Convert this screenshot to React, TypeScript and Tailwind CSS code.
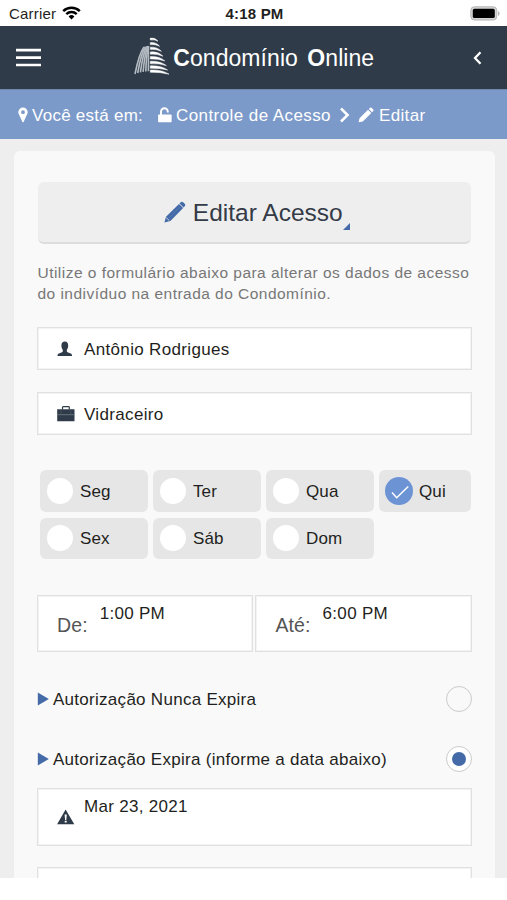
import clsx from "clsx";

const days = [
  { name: "Seg", checked: false },
  { name: "Ter", checked: false },
  { name: "Qua", checked: false },
  { name: "Qui", checked: true },
  { name: "Sex", checked: false },
  { name: "Sáb", checked: false },
  { name: "Dom", checked: false },
];

export default function App() {
  return (
    <div className="flex h-[900px] w-[507px] flex-col overflow-hidden bg-white font-['Liberation_Sans',Arial,sans-serif] text-[#1f1f21]">
      <StatusBar />
      <Header />
      <Breadcrumb />
      <main className="h-[739px] overflow-hidden bg-[#eeeeee] pl-[14px] pr-3 pt-3">
        <div className="h-[760px] rounded-md bg-[#f9f9f9] pl-[22.5px] pr-[23.5px] pt-[31px]">
          <Title />
          <p className="ml-px mt-[18px] whitespace-nowrap text-[15.5px] leading-[21px] tracking-[0.47px] text-[#777777]">
            Utilize o formulário abaixo para alterar os dados de acesso
            <br />
            do indivíduo na entrada do Condomínio.
          </p>
          <Field className="mt-[23px]" text="Antônio Rodrigues">
            <UserIcon />
          </Field>
          <Field className="mt-[22px]" text="Vidraceiro">
            <BriefcaseIcon />
          </Field>
          <Days />
          <div className="mt-[36px] flex gap-[2px]">
            <TimeField label="De:" value="1:00 PM" />
            <TimeField label="Até:" value="6:00 PM" />
          </div>
          <Radio className="mt-[34px]" label="Autorização Nunca Expira" />
          <Radio
            className="mt-[34px]"
            label="Autorização Expira (informe a data abaixo)"
            checked
          />
          <div className="mt-4 flex h-[58px] border border-[#e1e1e1] bg-white pl-[19px] shadow-[inset_0_0_0_1px_#f3f3f3]">
            <WarningIcon />
            <span className="ml-[9.5px] mt-[8px] text-[17px] leading-5 tracking-[0.3px]">
              Mar 23, 2021
            </span>
          </div>
          <div className="mt-[21px] h-[58px] border border-[#e1e1e1] bg-white shadow-[inset_0_0_0_1px_#f3f3f3]" />
        </div>
      </main>
    </div>
  );
}

function StatusBar() {
  return (
    <div className="grid h-[26px] grid-cols-3 items-center pl-[9px] pr-[7px]">
      <div className="flex items-center gap-[6px]">
        <span className="pt-[2px] text-[15px] leading-5 tracking-[0.2px]">Carrier</span>
        <svg width="19" height="14" viewBox="0 0 19 14" fill="none" stroke="#000" strokeWidth="2.5">
          <path d="M1.2 5.1a12 12 0 0 1 16.6 0" />
          <path d="M4.3 8.2a7.5 7.5 0 0 1 10.4 0" />
          <path d="M6.6 10.5a4.1 4.1 0 0 1 5.8 0L9.5 13.4Z" fill="#000" stroke="none" />
        </svg>
      </div>
      <span className="whitespace-nowrap pt-[2px] text-center text-[15px] font-bold leading-5 tracking-[0.2px]">
        4:18 PM
      </span>
      <svg className="justify-self-end" width="30" height="15" viewBox="0 0 30 15">
        <rect x="0.8" y="0.8" width="26" height="13.2" rx="3.6" fill="#d4d4d4" stroke="#b5b5b5" />
        <rect x="2.8" y="2.8" width="22" height="9.2" rx="1.6" fill="#000" />
        <path d="M28.2 5v5c1.8-.7 1.8-4.3 0-5Z" fill="#a9a9a9" />
      </svg>
    </div>
  );
}

function Header() {
  return (
    <header className="flex h-[63px] items-center justify-between bg-[#2f3b48] pl-4 pr-[25px]">
      <svg width="25" height="19" viewBox="0 0 25 19" fill="#fff">
        <path d="M0 .8h25v2.6H0zM0 8.3h25v2.6H0zM0 15.7h25v2.6H0z" />
      </svg>
      <div className="mr-[6px] flex items-center">
        <div className="mb-[3px]">
          <Logo />
        </div>
        <span className="ml-[3.5px] whitespace-pre text-[23px] leading-7 tracking-[0.06px] text-white">
          <b>C</b>ondomínio <b className="ml-[3px]">O</b>nline
        </span>
      </div>
      <svg width="9" height="14" viewBox="0 0 9 14" fill="none" stroke="#fff" strokeWidth="2.3">
        <path d="M7.5 1.2 2 7l5.5 5.8" />
      </svg>
    </header>
  );
}

function Logo() {
  return (
    <svg width="36" height="38" viewBox="0 0 36 38" fill="none">
      <g stroke="#b4bbc2" strokeWidth="1.6">
        <path d="M1 37Q5 17 10 10" />
        <path d="M3.7 36Q7 17 11.4 9.6" />
        <path d="M6.4 35.4Q8.8 17 12.8 9.3" />
        <path d="M9.1 34.9Q10.7 17 13.8 9.1" />
        <path d="M11.8 34.5Q12.3 17 14.6 9" />
        <path d="M14.4 34.2V9" />
      </g>
      <g fill="#fff" stroke="#fff" strokeWidth="0.5">
        <path d="M16.3 1.1Q21 .2 24 4.2Q20.5 2.4 16.3 3Z" />
        <path d="M16.3 5.6Q22 5 25.6 9.3Q21.4 7 16.3 7.6Z" />
        <path d="M16.3 10.2Q23 9.7 27.4 14.3Q22 11.9 16.3 12.4Z" />
        <path d="M16.3 14.9Q24 14.3 29 19.2Q23 16.7 16.3 17.2Z" />
        <path d="M16.3 19.6Q25 19 30.8 23.9Q24 21.5 16.3 22Z" />
        <path d="M16.3 24.3Q26 23.8 32.4 28.6Q25 26.2 16.3 26.7Z" />
        <path d="M16.3 28.8Q27 28.4 33.6 33Q26 30.9 16.3 31.3Z" />
        <path d="M16.3 33Q28 32.5 35 37.2Q26 35 16.3 35.3Z" />
      </g>
    </svg>
  );
}

function Breadcrumb() {
  return (
    <nav className="flex h-[50px] items-center border-t border-[#6f88ae] bg-[#7c9ac9] pl-[18px] pt-px text-[17px] leading-5 text-white">
      <svg width="10" height="16" viewBox="0 0 10 16" fill="#fff">
        <path
          fillRule="evenodd"
          d="M5 .5a4.7 4.7 0 0 0-4.7 4.7c0 1 .3 1.7.7 2.4l3.3 7.1c.3.7 1.1.7 1.4 0L9 7.6c.4-.7.7-1.4.7-2.4A4.7 4.7 0 0 0 5 .5Zm0 2.8a1.9 1.9 0 1 1 0 3.8 1.9 1.9 0 0 1 0-3.8Z"
        />
      </svg>
      <span className="ml-1 w-[112px] whitespace-nowrap pt-px tracking-[0.26px]">
        Você está em:
      </span>
      <svg className="ml-[14px]" width="14" height="16" viewBox="0 0 14 16">
        <path d="M3 8V4.7a3.4 3.4 0 0 1 6.8 0v.8" fill="none" stroke="#fff" strokeWidth="1.9" />
        <path d="M.9 7.5h11.9q.8 0 .8.8v6.2q0 .8-.8.8H.9q-.8 0-.8-.8V8.3q0-.8.8-.8Z" fill="#fff" />
      </svg>
      <span className="ml-1 w-[155px] whitespace-nowrap pt-px tracking-[0.42px]">
        Controle de Acesso
      </span>
      <svg className="ml-[8px]" width="11" height="16" viewBox="0 0 11 16" fill="none" stroke="#fff" strokeWidth="2.5">
        <path d="m2 1.5 6.6 6.5L2 14.5" />
      </svg>
      <svg className="ml-[8px]" width="16" height="16" viewBox="0 0 16 16" fill="#fff">
        <path d="M.6 15.3 1.5 11.2 10 2.8l3.3 3.3L4.8 14.4ZM10.8 2.1 12.2.8q.7-.6 1.3 0L15.3 2.6q.5.6 0 1.3L14 5.3Z" />
      </svg>
      <span className="ml-[5px] pt-px tracking-[0.35px]">Editar</span>
    </nav>
  );
}

function Title() {
  return (
    <div className="ml-px flex h-[62px] w-[433px] items-center justify-center rounded-md border-b-2 border-[#dddddd] bg-[#eeeeee] pl-[6px]">
      <svg width="22" height="22" viewBox="0 0 22 22" fill="#446ba8">
        <path d="M.4 21.5 2 15.7 15 3l4.1 4.1L6.4 19.9ZM15.5 2.5 17 1q1.1-.8 2.2.2l1.7 1.7q.9 1 0 2.1l-1.3 1.5Z" />
        <path d="M5 16.9 15.8 6.1" stroke="#5b80b6" strokeWidth="0.7" />
        <path d="m2.2 16.6 3.1 3" stroke="#eeeeee" strokeWidth="0.8" />
      </svg>
      <h1 className="ml-[6.5px] pt-px text-[24.5px] leading-8 text-[#343b47]">Editar Acesso</h1>
      <svg className="mt-[29px]" width="7" height="7" viewBox="0 0 7 7" fill="#446ba8">
        <path d="M7 0v7H0Z" />
      </svg>
    </div>
  );
}

function Field({
  text,
  className,
  children,
}: {
  text: string;
  className?: string;
  children: React.ReactNode;
}) {
  return (
    <div
      className={clsx(
        "flex h-[43px] items-center border border-[#e1e1e1] bg-white pl-[19px] pt-px shadow-[inset_0_0_0_1px_#f3f3f3]",
        className
      )}
    >
      {children}
      <span className="ml-[9.5px] pt-px text-[17px] leading-5 tracking-[0.34px]">{text}</span>
    </div>
  );
}

function Days() {
  return (
    <div className="ml-[3.5px] mt-[35px] grid grid-cols-[108px_108px_108px_92px] gap-x-[5px] gap-y-[6px]">
      {days.map((day) => (
        <div
          className={clsx(
            "flex h-[41.5px] items-center rounded-md bg-[#e6e6e6]",
            day.checked ? "pl-[6px]" : "pl-[7px]"
          )}
          key={day.name}
        >
          {day.checked ? (
            <svg className="mr-[6px]" width="28" height="28" viewBox="0 0 28 28">
              <circle cx="14" cy="14" r="14" fill="#6c94d4" />
              <path d="m7 15.5 4.7 5.2L23.2 9.5" fill="none" stroke="#fff" strokeWidth="1.5" />
            </svg>
          ) : (
            <span className="mr-[7px] size-[26px] rounded-full bg-white" />
          )}
          <span className="pt-[2px] text-[17px] leading-5 tracking-[0.1px]">{day.name}</span>
        </div>
      ))}
    </div>
  );
}

function TimeField({ label, value }: { label: string; value: string }) {
  return (
    <div className="flex h-[57px] w-[216.5px] border border-[#e1e1e1] bg-white pl-[19.5px] shadow-[inset_0_0_0_1px_#f3f3f3]">
      <span className="mt-[17px] text-[19.5px] leading-6 tracking-[0.1px] text-[#555555]">
        {label}
      </span>
      <span className="ml-3 mt-[8px] text-[17px] leading-5 tracking-[0.3px]">{value}</span>
    </div>
  );
}

function Radio({
  label,
  checked,
  className,
}: {
  label: string;
  checked?: boolean;
  className?: string;
}) {
  return (
    <div className={clsx("flex h-[26px] items-center", className)}>
      <svg width="12" height="14" viewBox="0 0 12 14" fill="#446ba8">
        <path d="M.8.5 11.8 7 .8 13.5Z" />
      </svg>
      <span className="ml-[4.5px] whitespace-nowrap pt-[2px] text-[17px] leading-5 tracking-[0.28px]">
        {label}
      </span>
      <span
        className={clsx(
          "ml-auto flex size-[26px] items-center justify-center rounded-full border border-[#cccccc]",
          checked && "bg-white"
        )}
      >
        {checked && <span className="size-[14px] rounded-full bg-[#446ba8]" />}
      </span>
    </div>
  );
}

function UserIcon() {
  return (
    <svg width="18" height="16" viewBox="0 0 18 16" fill="#2f3b48">
      <path d="M4.4 4.5C4.4 1.9 5.7.6 7.8.6s3.4 1.3 3.4 3.9c0 2-.7 3.4-1.4 4.5v1.1c0 .8.5 1.2 1.4 1.5l2.5.9c.9.3 1.4 1.2 1.4 2.6H.5c0-1.4.5-2.3 1.4-2.6l2.5-.9c.9-.3 1.4-.7 1.4-1.5V9C5.1 7.9 4.4 6.5 4.4 4.5Z" />
    </svg>
  );
}

function BriefcaseIcon() {
  return (
    <svg width="18" height="16" viewBox="0 0 18 16" fill="#2f3b48">
      <path d="M5.5 3.5V1.4q0-.8.8-.8h5.2q.8 0 .8.8V3.5" fill="none" stroke="#2f3b48" strokeWidth="1.2" />
      <path d="M.2 3.2h17.3v11.5q0 .6-.6.6H.8q-.6 0-.6-.6Z" />
      <path d="M.2 8.7h17.3" stroke="#73808a" strokeWidth="0.8" />
      <path d="M4 3.2v5M13.7 3.2v5" stroke="#53606c" strokeWidth="0.6" />
    </svg>
  );
}

function WarningIcon() {
  return (
    <svg className="mt-5" width="18" height="16" viewBox="0 0 18 16">
      <path d="M8.6.6 17.3 15.2H.1Z" fill="#2f3b48" />
      <path d="M7.6 5.6h2.2l-.5 5.3H8.1ZM7.7 11.8h2v1.8h-2Z" fill="#fff" />
    </svg>
  );
}
